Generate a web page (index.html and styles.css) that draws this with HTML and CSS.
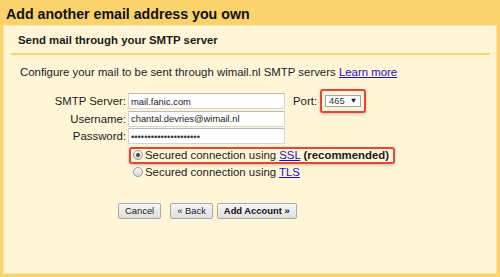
FILE: index.html
```html
<!DOCTYPE html>
<html lang="en">
<head>
    <meta charset="UTF-8">
    <meta name="viewport" content="width=device-width, initial-scale=1.0">
    <title>Add another email address you own</title>
    <link rel="stylesheet" href="styles.css">
</head>
<body>
    <h1 class="page-title">Add another email address you own</h1>

    <!-- SMTP panel -->
    <main class="panel">
        <div class="panel-head">
            <h2>Send mail through your SMTP server</h2>
        </div>
        <div class="panel-body">
            <p class="intro">Configure your mail to be sent through wimail.nl SMTP servers <a href="#">Learn more</a></p>

            <form class="smtp-form" onsubmit="return false">
                <label class="field-label" for="server">SMTP Server:</label>
                <input class="field-input" id="server" type="text" value="mail.fanic.com">
                <div class="port">
                    <span class="port-label">Port:</span>
                    <span class="highlight port-box">
                        <span class="select">465 <span class="arrow">▼</span></span>
                    </span>
                </div>

                <label class="field-label" for="user">Username:</label>
                <input class="field-input" id="user" type="text" value="chantal.devries@wimail.nl">

                <label class="field-label" for="pass">Password:</label>
                <input class="field-input pass" id="pass" type="text" value="•••••••••••••••••••••">

                <div class="options">
                    <div class="option highlight">
                        <span class="radio checked"></span>
                        <span>Secured connection using <a href="#">SSL</a> <b>(recommended)</b></span>
                    </div>
                    <div class="option">
                        <span class="radio"></span>
                        <span>Secured connection using <a href="#">TLS</a></span>
                    </div>
                </div>
            </form>

            <div class="actions">
                <button class="btn">Cancel</button>
                <button class="btn back">« Back</button>
                <button class="btn strong">Add Account »</button>
            </div>
        </div>
    </main>
</body>
</html>
```

FILE: styles.css
```css
:root {
    --outer: #FAD36C;
    --panel: #FFF6D8;
    --red: #E2473D;
    --text: #1a1a1a;
}
html, body {
    height: 100%;
}
body {
    margin: 0;
    background: var(--outer);
    font-family: "Liberation Sans", Arial, sans-serif;
    color: var(--text);
    display: flex;
    flex-direction: column;
    overflow: hidden;
}
.page-title {
    margin: 0;
    padding: 5px 6px 2px;
    font-size: 14.2px;
    line-height: 18px;
    font-weight: bold;
    color: #111;
}
/* panel */
.panel {
    flex: 1;
    margin: 0 3px 3px;
    background: var(--panel);
    border: 1px solid #FDE6A4;
}
.panel-head {
    margin: 0 6px 0 7px;
    padding: 7px 0 6px 7px;
    border-bottom: 2px solid var(--outer);
}
.panel-head h2 {
    margin: 0;
    font-size: 11.4px;
    line-height: 14px;
    font-weight: bold;
}
.panel-body {
    padding: 0 16px;
    font-size: 11.4px;
}
.intro {
    margin: 10px 0 14px;
    line-height: 14px;
}
a {
    color: #1a0dcc;
}
/* form */
.smtp-form {
    display: grid;
    grid-template-columns: 106px 157px auto;
    column-gap: 2px;
    row-gap: 1.5px;
    align-items: center;
}
.field-label {
    grid-column: 1;
    text-align: right;
    line-height: 16px;
}
.field-input {
    grid-column: 2;
    box-sizing: border-box;
    height: 16px;
    width: 157px;
    margin: 0;
    padding: 0 2px;
    border: 1px solid #d4d4d4;
    border-top-color: #b9b9b9;
    background: #fff;
    font-family: inherit;
    font-size: 9.4px;
    color: #222;
    outline: none;
}
.field-input.pass {
    font-size: 9.4px;
    color: #333;
}
.port {
    grid-column: 3;
    grid-row: 1;
    display: flex;
    align-items: center;
    margin: -4px 0 -4px 6px;
}
.port-label {
    margin-right: 3px;
}
.highlight {
    border: 2px solid var(--red);
    border-radius: 3px;
    box-shadow: 0 1px 3px rgba(0, 0, 0, 0.25);
}
.port-box {
    display: flex;
    padding: 4px 3px;
}
.select {
    box-sizing: border-box;
    width: 36px;
    height: 12px;
    padding: 0 3px;
    border: 1px solid #a5a5a5;
    background: #fff;
    font-size: 9.4px;
    line-height: 10px;
    color: #333;
    display: flex;
    justify-content: space-between;
}
.arrow {
    font-size: 7.5px;
    color: #111;
}
/* radios */
.options {
    grid-column: 2 / span 2;
    margin: 1px 0 0 1px;
    display: flex;
    flex-direction: column;
    align-items: flex-start;
}
.option {
    display: flex;
    align-items: center;
    gap: 2px;
    padding: 0 4px 0 2px;
    height: 13px;
    border: 2px solid transparent;
}
.option.highlight {
    border-color: var(--red);
}
.radio {
    box-sizing: border-box;
    width: 10px;
    height: 10px;
    border-radius: 50%;
    border: 1px solid #9a9a9a;
    background: linear-gradient(#f8f8f8, #d6d6d6);
    display: grid;
    place-items: center;
}
.radio.checked::after {
    content: "";
    width: 4px;
    height: 4px;
    border-radius: 50%;
    background: #444;
}
/* buttons */
.actions {
    display: flex;
    gap: 4px;
    margin: 22px 0 0 98px;
}
.btn {
    height: 16px;
    padding: 0 6px;
    border: 1px solid #a9a9a9;
    border-radius: 2px;
    background: linear-gradient(#f7f7f7, #dedede);
    font-family: inherit;
    font-size: 9.4px;
    color: #222;
    cursor: pointer;
}
.btn.back {
    margin-left: 5px;
}
.btn.strong {
    font-weight: bold;
    color: #111;
}
```
